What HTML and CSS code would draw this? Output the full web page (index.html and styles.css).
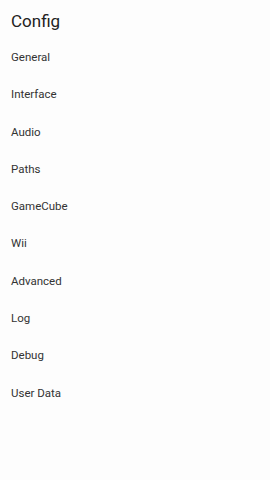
FILE: index.html
```html
<!DOCTYPE html>
<html lang="en">
<head>
    <meta charset="UTF-8">
    <meta name="viewport" content="width=device-width, initial-scale=1.0">
    <title>Config</title>
    <link rel="stylesheet" href="styles.css">
</head>
<body>
    <div class="config">
        <h1 class="title">Config</h1>
        <ul class="menu">
            <li class="menu-item">General</li>
            <li class="menu-item">Interface</li>
            <li class="menu-item">Audio</li>
            <li class="menu-item">Paths</li>
            <li class="menu-item">GameCube</li>
            <li class="menu-item">Wii</li>
            <li class="menu-item">Advanced</li>
            <li class="menu-item">Log</li>
            <li class="menu-item">Debug</li>
            <li class="menu-item">User Data</li>
        </ul>
    </div>
</body>
</html>
```

FILE: styles.css
```css
body {
    margin: 0;
    font-family: Roboto, "Noto Sans", sans-serif;
    background-color: #fdfdfd;
    color: #333;
}

.config {
    width: 270px;
    height: 480px;
}

.title {
    margin: 0;
    padding: 10px 11px 7px;
    font-size: 17px;
    font-weight: 400;
    line-height: 22px;
    color: #222;
}

.menu {
    list-style: none;
    margin: 0;
    padding: 0;
}

.menu-item {
    height: 37.3px;
    line-height: 37.3px;
    padding-left: 11px;
    font-size: 11.5px;
}
```
